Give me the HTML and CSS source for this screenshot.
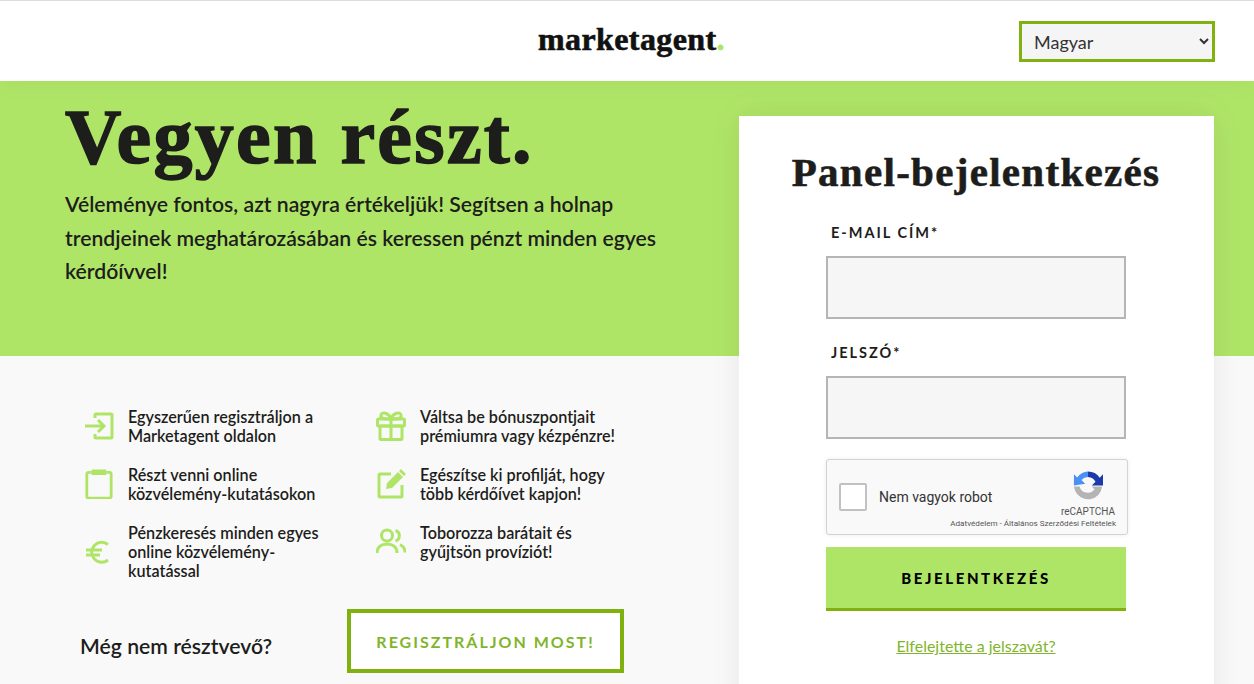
FILE: index.html
```html
<!DOCTYPE html>
<html lang="hu">
<head>
    <meta charset="UTF-8">
    <meta name="viewport" content="width=device-width, initial-scale=1.0">
    <title>Marketagent</title>
    <link rel="stylesheet" href="styles.css">
</head>
<body>
    <header class="topbar">
        <div class="logo">marketagent<span class="logo-dot">.</span></div>
        <select class="lang-select">
            <option>Magyar</option>
        </select>
    </header>

    <main class="page">
        <section class="intro">
            <div class="hero">
                <h1 class="hero-title">Vegyen részt.</h1>
                <p class="hero-text">Véleménye fontos, azt nagyra értékeljük! Segítsen a holnap trendjeinek meghatározásában és keressen pénzt minden egyes kérdőívvel!</p>
            </div>

            <ul class="features">
                <li class="feature">
                    <svg class="feature-icon" viewBox="0 0 30 30"><path d="M11 7V4a1 1 0 0 1 1-1h15a1 1 0 0 1 1 1v22a1 1 0 0 1-1 1H12a1 1 0 0 1-1-1v-3"/><path d="M1 15h19M14 9l6 6-6 6"/></svg>
                    <span>Egyszerűen regisztráljon a Marketagent oldalon</span>
                </li>
                <li class="feature">
                    <svg class="feature-icon" viewBox="0 0 30 30"><rect x="1.500" y="8" width="27" height="7" rx="1"/><rect x="4" y="15" width="22" height="13.500" rx="1"/><path d="M15 8v20.500M15 8c-2-6-9-8-10-4s4 4 10 4zM15 8c2-6 9-8 10-4s-4 4-10 4z"/></svg>
                    <span>Váltsa be bónuszpontjait prémiumra vagy kézpénzre!</span>
                </li>
                <li class="feature">
                    <svg class="feature-icon" viewBox="0 0 30 32"><path d="M7 3.500H4a2 2 0 0 0-2 2V29a2 2 0 0 0 2 2h22a2 2 0 0 0 2-2V5.500a2 2 0 0 0-2-2h-3"/><rect class="icon-fill" x="7" y="0.500" width="16" height="6" rx="1"/></svg>
                    <span>Részt venni online közvélemény-kutatásokon</span>
                </li>
                <li class="feature">
                    <svg class="feature-icon" viewBox="0 0 30 30"><path d="M15 5H4a1 1 0 0 0-1 1v21a1 1 0 0 0 1 1h21a1 1 0 0 0 1-1V16"/><path class="icon-fill" d="M10 20l1-6L22 3l5 5-11 11zM25 0l5 5-2 2-5-5z"/></svg>
                    <span>Egészítse ki profilját, hogy több kérdőívet kapjon!</span>
                </li>
                <li class="feature">
                    <svg class="feature-icon" viewBox="0 0 30 30"><path d="M24 7.500A10 10 0 1 0 24 23"/><path d="M2 13h16M2 18h14"/></svg>
                    <span>Pénzkeresés minden egyes online közvélemény-kutatással</span>
                </li>
                <li class="feature">
                    <svg class="feature-icon" viewBox="0 0 30 30"><circle cx="11" cy="8.500" r="5.500"/><path d="M1 26c0-6 4.500-9 10-9s10 3 10 9"/><path d="M19.500 3.500a5.500 5.500 0 0 1 0 10.500M24 17.500c3 1.500 5 4.500 5 8"/></svg>
                    <span>Toborozza barátait és gyűjtsön províziót!</span>
                </li>
            </ul>

            <div class="signup">
                <span class="signup-text">Még nem résztvevő?</span>
                <a class="signup-btn" href="#">REGISZTRÁLJON MOST!</a>
            </div>
        </section>

        <form class="login-card">
            <h2 class="login-title">Panel-bejelentkezés</h2>
            <label class="field-label" for="email">E-MAIL CÍM*</label>
            <input class="field-input" id="email" type="text">
            <label class="field-label" for="password">JELSZÓ*</label>
            <input class="field-input" id="password" type="password">

            <div class="captcha">
                <span class="captcha-box"></span>
                <span class="captcha-text">Nem vagyok robot</span>
                <div class="captcha-brand">
                    <svg class="captcha-logo" viewBox="0 0 32 32">
                        <path fill="#1c3aa9" d="M16 1a15 15 0 0 1 12.500 6.700L32 4v12H20l4-4a10 10 0 0 0-8-5z"/>
                        <path fill="#4a90f5" d="M1 16h0V4l3.500 3.500A15 15 0 0 1 16 1v6a10 10 0 0 0-7 3l4 4z"/>
                        <path fill="#b4b4b4" d="M1 17h6a9 9 0 0 0 16 3l-3-3h11a15 15 0 0 1-29 4l-1-4z"/>
                    </svg>
                    <span class="captcha-name">reCAPTCHA</span>
                </div>
                <span class="captcha-links">Adatvédelem - Általános Szerződési Feltételek</span>
            </div>

            <button class="login-btn" type="button">BEJELENTKEZÉS</button>
            <a class="forgot-link" href="#">Elfelejtette a jelszavát?</a>
        </form>
    </main>
</body>
</html>
```

FILE: styles.css
```css
* {
    box-sizing: border-box;
}

html, body {
    height: 684px;
    overflow: hidden;
}

body {
    margin: 0;
    font-family: Lato, "Noto Sans", sans-serif;
    color: #1d1d1b;
    background-color: #f9f9f9;
}

.topbar {
    position: relative;
    z-index: 1;
    height: 81px;
    border-top: 1px solid #dcdcdc;
    background-color: #fff;
    box-shadow: 0 4px 20px rgba(0, 0, 0, 0.04);
    display: grid;
    grid-template-columns: 1fr auto 1fr;
    align-items: center;
    padding: 0 39px;
}

.logo {
    grid-column: 2;
    margin: -4px 0 0 9px;
    font-family: "Liberation Serif", serif;
    font-size: 32px;
    font-weight: bold;
    color: #111;
    -webkit-text-stroke: 0.6px #111;
    letter-spacing: 0.4px;
}

.logo-dot {
    color: #afe567;
    -webkit-text-stroke: 0.6px #afe567;
}

.lang-select {
    grid-column: 3;
    justify-self: end;
    width: 196px;
    height: 41px;
    padding: 2px 0 0 8px;
    border: 3px solid #7fb20f;
    background-color: #f5f5f5;
    font-family: Lato, sans-serif;
    font-size: 18px;
    color: #333;
}

.page {
    height: 603px;
    display: flex;
    padding-left: 65px;
    background: linear-gradient(#afe567 275px, #f9f9f9 275px);
    overflow: hidden;
}

.intro {
    width: 674px;
    flex-shrink: 0;
}

.hero {
    height: 275px;
}

.hero-title {
    margin: 16px 0 0;
    font-family: "Liberation Serif", serif;
    font-size: 78px;
    line-height: 80px;
    font-weight: bold;
    letter-spacing: 2.300px;
    -webkit-text-stroke: 1.500px #1d1d1b;
}

.hero-text {
    margin: 11px 0 0;
    width: 610px;
    font-size: 21.200px;
    line-height: 33.500px;
    font-weight: 600;
}

.features {
    list-style: none;
    margin: 0;
    padding: 35px 0 0 19px;
    display: grid;
    grid-template-columns: 292px 260px;
    row-gap: 20px;
}

.feature {
    display: flex;
    align-items: center;
    gap: 14px;
    font-size: 16.200px;
    line-height: 19px;
    font-weight: 600;
    align-self: start;
}

.feature span {
    max-width: 205px;
}

.feature-icon {
    width: 30px;
    height: 30px;
    flex-shrink: 0;
    fill: none;
    stroke: #afe567;
    stroke-width: 3;
}

.icon-fill {
    fill: #afe567;
    stroke: none;
}

.signup {
    margin-top: 29px;
    padding-left: 15px;
    display: flex;
    align-items: center;
}

.signup-text {
    width: 267px;
    margin-top: 10px;
    font-size: 21.200px;
    font-weight: 600;
}

.signup-btn {
    width: 277px;
    height: 64px;
    display: flex;
    align-items: center;
    justify-content: center;
    border: 4px solid #7fb20f;
    background-color: #fff;
    color: #7fb52a;
    font-size: 16px;
    font-weight: 700;
    letter-spacing: 2px;
    text-decoration: none;
}

.login-card {
    width: 475px;
    height: 640px;
    margin-top: 35px;
    padding: 0 88px 0 87px;
    background-color: #fff;
    box-shadow: 0 0 30px rgba(0, 0, 0, 0.08);
    display: flex;
    flex-direction: column;
}

.login-title {
    margin: 32px -60px 0;
    text-align: center;
    font-family: "Liberation Serif", serif;
    font-size: 41px;
    line-height: 48px;
    font-weight: bold;
    letter-spacing: 1.300px;
    color: #1d1d1b;
    -webkit-text-stroke: 0.6px #1d1d1b;
}

.field-label {
    margin: 27px 0 13px 5px;
    font-size: 14.500px;
    line-height: 20px;
    font-weight: 700;
    letter-spacing: 2px;
}

.field-input {
    width: 300px;
    height: 63px;
    flex-shrink: 0;
    border: 2px solid #b5b5b5;
    background-color: #f6f6f6;
}

.field-input + .field-label {
    margin-top: 24px;
}

.captcha {
    position: relative;
    width: 302px;
    height: 76px;
    flex-shrink: 0;
    margin-top: 20px;
    padding-left: 12px;
    display: flex;
    align-items: center;
    border: 1px solid #d3d3d3;
    border-radius: 3px;
    background-color: #f9f9f9;
    box-shadow: 0 0 4px rgba(0, 0, 0, 0.08);
    font-family: Roboto, sans-serif;
}

.captcha-box {
    width: 28px;
    height: 28px;
    border: 2px solid #c1c1c1;
    border-radius: 2px;
    background-color: #fff;
}

.captcha-text {
    margin-left: 12px;
    font-size: 14px;
    color: #333;
}

.captcha-brand {
    position: absolute;
    top: 10px;
    right: 12px;
    display: flex;
    flex-direction: column;
    align-items: center;
}

.captcha-logo {
    width: 30px;
    height: 31px;
}

.captcha-name {
    margin-top: 5px;
    font-size: 10px;
    color: #555;
}

.captcha-links {
    position: absolute;
    right: 11px;
    bottom: 6px;
    font-size: 8.100px;
    color: #555;
}

.login-btn {
    width: 300px;
    height: 64px;
    flex-shrink: 0;
    margin-top: 12px;
    border: 0;
    border-bottom: 3px solid #7fb20f;
    background-color: #afe567;
    color: #000;
    font-family: Lato, sans-serif;
    font-size: 15px;
    font-weight: 900;
    letter-spacing: 2.600px;
}

.forgot-link {
    margin-top: 25px;
    text-align: center;
    font-size: 16px;
    color: #7fb52a;
}
```
